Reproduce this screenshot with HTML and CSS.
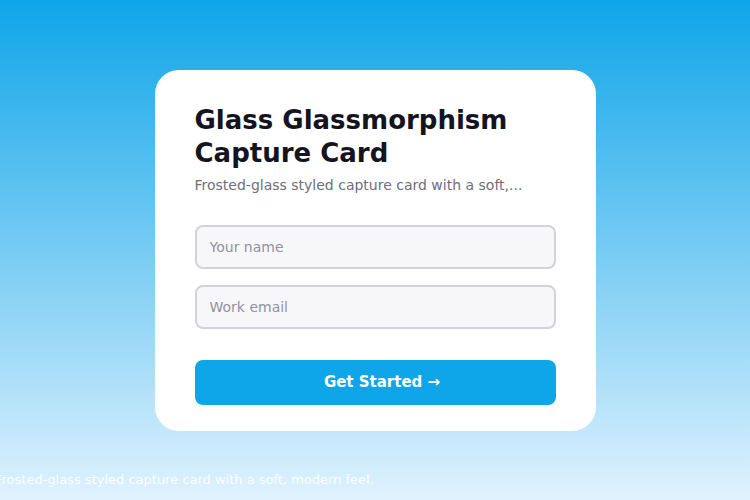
FILE: index.html
```html
<!DOCTYPE html>
<html>
<head>
<meta charset="utf-8">
<link rel="stylesheet" href="styles.css">
</head>
<body>
<div class="page">
  <div class="spacer"></div>
  <div class="card">
    <h1 class="title">Glass Glassmorphism Capture Card</h1>
    <p class="subtitle">Frosted-glass styled capture card with a soft,...</p>
    <form class="form">
      <input class="field" type="text" placeholder="Your name">
      <input class="field" type="email" placeholder="Work email">
      <button class="cta" type="button">Get Started →</button>
    </form>
  </div>
  <div class="foot-row">
    <p class="foot">Frosted-glass styled capture card with a soft, modern feel.</p>
  </div>
</div>
</body>
</html>
```
FILE: styles.css
```css
* { box-sizing: border-box; }
html, body { margin: 0; padding: 0; }
body {
  font-family: "DejaVu Sans", sans-serif;
  background: linear-gradient(180deg, #0ea5e9 0%, #e0f2fe 100%);
  width: 750px;
  height: 500px;
  overflow: hidden;
}
.page {
  height: 500px;
  display: grid;
  grid-template-rows: 1fr auto 1fr;
  justify-items: center;
}
.card {
  width: 441px;
  height: 361px;
  background: #ffffff;
  border-radius: 24px;
  padding: 34px 40px 26px;
}
.title {
  margin: 0;
  font-size: 26px;
  line-height: 33px;
  font-weight: 700;
  color: #14141f;
}
.subtitle {
  margin: 5px 0 0;
  font-size: 14px;
  line-height: 20px;
  color: #6e6e7a;
}
.form {
  margin-top: 30px;
  display: flex;
  flex-direction: column;
}
.field {
  height: 44px;
  width: 100%;
  border: 2px solid #d2d2dc;
  border-radius: 8px;
  background: #f7f7fa;
  padding: 0 13px;
  font-family: "DejaVu Sans", sans-serif;
  font-size: 14px;
  color: #14141f;
  margin-bottom: 16px;
  outline: none;
}
.field::placeholder { color: #92929e; }
.cta {
  margin-top: 15px;
  height: 45px;
  width: 100%;
  border: none;
  border-radius: 8px;
  background: #0ea5e9;
  color: #ffffff;
  font-family: "DejaVu Sans", sans-serif;
  font-size: 15px;
  font-weight: 700;
  padding: 0 0 0 14px;
}
.foot-row {
  width: 100%;
  align-self: end;
  padding-bottom: 12px;
}
.foot {
  margin: 0 0 0 -5px;
  font-size: 13px;
  line-height: 16px;
  color: rgba(255,255,255,0.92);
}
```
